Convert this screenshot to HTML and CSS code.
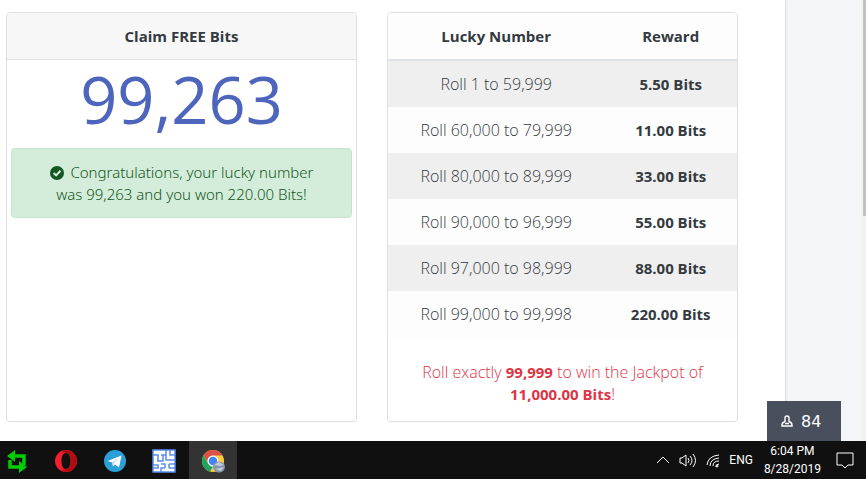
FILE: index.html
```html
<!DOCTYPE html>
<html lang="en">
<head>
    <meta charset="UTF-8">
    <meta name="viewport" content="width=device-width, initial-scale=1.0">
    <title>Claim FREE Bits</title>
    <link rel="stylesheet" href="styles.css">
</head>
<body>
    <div class="page">
        <main class="content">
            <section class="card">
                <h2 class="card-header">Claim FREE Bits</h2>
                <div class="card-body">
                    <div class="lucky-number">99,263</div>
                    <div class="alert" role="alert">
                        <svg class="check" viewBox="0 0 14 14"><circle cx="7" cy="7" r="7" fill="#155724"/><path fill="none" stroke="#d4edda" stroke-width="2" d="M3.600 7l2.500 2.400 4.400-4.600"/></svg>
                        Congratulations, your lucky number was 99,263 and you won 220.00 Bits!
                    </div>
                </div>
            </section>
            <section class="card">
                <table class="rewards">
                    <thead>
                        <tr><th>Lucky Number</th><th>Reward</th></tr>
                    </thead>
                    <tbody>
                        <tr><td>Roll 1 to 59,999</td><td><b>5.50 Bits</b></td></tr>
                        <tr><td>Roll 60,000 to 79,999</td><td><b>11.00 Bits</b></td></tr>
                        <tr><td>Roll 80,000 to 89,999</td><td><b>33.00 Bits</b></td></tr>
                        <tr><td>Roll 90,000 to 96,999</td><td><b>55.00 Bits</b></td></tr>
                        <tr><td>Roll 97,000 to 98,999</td><td><b>88.00 Bits</b></td></tr>
                        <tr><td>Roll 99,000 to 99,998</td><td><b>220.00 Bits</b></td></tr>
                    </tbody>
                </table>
                <p class="jackpot">Roll exactly <b>99,999</b> to win the Jackpot of <b>11,000.00 Bits</b>!</p>
            </section>
        </main>
        <aside class="side">
            <div class="scroll-track"><div class="scroll-thumb"></div></div>
            <button class="online" type="button">
                <svg width="12" height="12" viewBox="0 0 12 12" fill="none" stroke="#fff" stroke-width="1.400"><path d="M4 7V3q0-2 2-2t2 2v4M4 6.500Q1 7.500 1 10v1h10v-1q0-2.500-3-3.500M4 8.500h4"/></svg>
                84
            </button>
        </aside>
    </div>

    <footer class="taskbar">
        <div class="apps">
            <button type="button" aria-label="Sync">
                <svg viewBox="0 0 24 24" fill="none"><path stroke="#0c0" stroke-width="3.500" d="M9 7h10v9M15 18H5v-7"/><path fill="#0c0" d="M10 1v12L2 7zM14 12v12l8-6z"/></svg>
            </button>
            <button type="button" aria-label="Opera">
                <svg viewBox="0 0 24 24"><path fill="#f0202c" fill-rule="evenodd" d="M12 1a11 11 0 1 0 0 22 11 11 0 0 0 0-22zm0 3c3 0 4.500 3.500 4.500 8S15 20 12 20s-4.500-3.500-4.500-8S9 4 12 4z"/><path fill="#b00c14" d="M12 1a11 11 0 0 1 0 22q-3 0-5-3 2 1.500 5 0c3 0 4.500-3.500 4.500-8S15 4 12 4q-3-1.500-5 0 2-3 5-3z"/></svg>
            </button>
            <button type="button" aria-label="Telegram">
                <svg viewBox="0 0 24 24"><circle cx="12" cy="12" r="11" fill="#2a9fd8"/><path fill="#fff" d="M4.500 12L18.500 6.500 16 18.500l-4-3-2 2-.8-4z"/><path fill="#b8d4e5" d="M9.200 13.500L16 8.500l-5 5.500-1 3.500z"/></svg>
            </button>
            <button type="button" aria-label="Maze">
                <svg viewBox="0 0 24 24"><path fill="#fff" d="M1 1h22v22H1z"/><path fill="none" stroke="#5b8df0" stroke-width="1.500" d="M1 1h22v22H1zM1 6h5v6M5 12h6V6h3M9 6h2M14 1v5M18 1v5h5M14 6v5h9M1 16h5v3H1M9 23v-4h4M9 15h4v4M17 15v4M17 15h6M17 19h6"/></svg>
            </button>
            <button class="active" type="button" aria-label="Chrome">
                <svg viewBox="0 0 24 24"><circle cx="12" cy="12" r="11" fill="#ffcd40"/><path fill="#dd5144" d="M2.500 6.500a11 11 0 0 1 19 0H12a5.500 5.500 0 0 0-4.800 8.200z"/><path fill="#1da462" d="M2.500 6.500l4.700 8.200a5.500 5.500 0 0 0 4.800 2.800L9 22.600A11 11 0 0 1 2.500 6.500z"/><circle cx="12" cy="12" r="5.500" fill="#fff"/><circle cx="12" cy="12" r="4.300" fill="#4285f4"/><ellipse cx="18" cy="18" rx="6" ry="5.500" fill="#8795b3"/><path fill="#c2cad9" d="M13 16l5-3 5 3-4 1zM14 20l9-2-3 4z"/></svg>
            </button>
        </div>
        <div class="tray">
            <svg width="14" height="18" viewBox="0 0 14 18"><path d="M1 12l6-6 6 6"/></svg>
            <svg width="18" height="18" viewBox="0 0 18 18"><path d="M1 7v5h2l4 3V4L3 7zM9 7q2 2.500 0 5M11 5q4 4.500 0 9M14 3q5 6.500 0 13"/></svg>
            <svg width="14" height="18" viewBox="0 0 14 18"><path d="M1 14Q2 5 13 4M4 15Q4 8 13 7M7 15q0-5 6-5M10 16q0-3 3-3"/><circle cx="11" cy="15" r="1"/></svg>
            <span>ENG</span>
            <time class="clock">6:04 PM<br>8/28/2019</time>
            <svg class="notify" width="18" height="18" viewBox="0 0 18 18"><path d="M1 2h16v12h-5l-3 3-3-3H1z"/></svg>
        </div>
    </footer>
</body>
</html>
```
FILE: styles.css
```css
* {
    margin: 0;
    padding: 0;
    box-sizing: border-box;
}

body {
    display: flex;
    flex-direction: column;
    min-height: 100vh;
    font-family: "Open Sans", "Noto Sans", sans-serif;
    font-size: 15px;
    font-weight: 300;
    line-height: 22px;
    color: #343a40;
    background-color: #f4f5f8;
}

b {
    font-size: 15px;
    font-weight: 700;
    line-height: 1;
}

button {
    border: none;
    cursor: pointer;
}

.page {
    display: flex;
    flex: 1;
}

.content {
    display: grid;
    grid-template-columns: 1fr 1fr;
    gap: 30px;
    flex: 1;
    padding: 12px 47px 19px 6px;
    background-color: #fff;
    border-right: 1px solid #dcdfe3;
    box-shadow: 0 0 2px #dcdfe3;
}

.card {
    border: 1px solid #dfdfdf;
    border-radius: 4px;
    text-align: center;
    overflow: hidden;
}

.card-header {
    padding: 12px;
    font-size: 15px;
    font-weight: 700;
    background-color: #f7f7f7;
    border-bottom: 1px solid #dfdfdf;
}

.card-body {
    padding: 4px;
}

.lucky-number {
    margin-bottom: 14px;
    font-size: 65px;
    font-weight: 400;
    line-height: 70px;
    color: #4e65bd;
}

.alert {
    padding: 12px 32px;
    font-family: "Noto Sans", sans-serif;
    color: #155724;
    background-color: #d4edda;
    border: 1px solid #c3e6cb;
    border-radius: 4px;
}

.check {
    width: 14px;
    height: 14px;
    margin-right: 3px;
    vertical-align: -2px;
}

.rewards {
    width: 100%;
    border-collapse: collapse;
    background-color: #fdfdfd;
}

.rewards th,
.rewards td {
    padding: 12px;
}

.rewards td {
    font-size: 16px;
}

.rewards th:first-child {
    width: 62%;
}

.rewards thead tr {
    border-bottom: 2px solid #dee2e6;
}

.rewards tbody tr:nth-child(odd) {
    background-color: #efefef;
}

.jackpot {
    padding: 24px 20px 16px;
    font-size: 16px;
    color: #dc3545;
}

.side {
    position: relative;
    width: 80px;
}

.scroll-track {
    width: 5px;
    height: 100%;
    margin-left: auto;
    padding-left: 2px;
    background-color: #f1f1f1;
}

.scroll-thumb {
    height: 49%;
    background-color: #c1c1c1;
}

.online {
    position: absolute;
    right: 25px;
    bottom: 0;
    display: flex;
    align-items: center;
    gap: 8px;
    width: 74px;
    height: 40px;
    padding-left: 14px;
    font-family: "DejaVu Sans", sans-serif;
    font-size: 16px;
    color: #fff;
    background-color: #494f5d;
}

.taskbar {
    display: flex;
    justify-content: space-between;
    height: 38px;
    color: #fff;
    background-color: #101010;
}

.apps {
    display: flex;
    gap: 1px;
}

.apps button {
    width: 48px;
    padding-top: 2px;
    background: none;
}

.apps button:first-child {
    width: 41px;
    padding-right: 8px;
}

.apps .active {
    background-color: #333;
}

.apps svg {
    width: 24px;
    height: 24px;
    vertical-align: middle;
}

.tray {
    display: flex;
    align-items: center;
    gap: 9px;
    padding: 0 12px 0 0;
    font-family: Roboto, sans-serif;
    font-size: 12px;
    font-weight: 400;
}

.tray span {
    margin-right: 2px;
}

.tray svg {
    fill: none;
    stroke: #fff;
}

.clock {
    line-height: 18px;
    text-align: center;
}

.notify {
    margin-left: 6px;
}
```
